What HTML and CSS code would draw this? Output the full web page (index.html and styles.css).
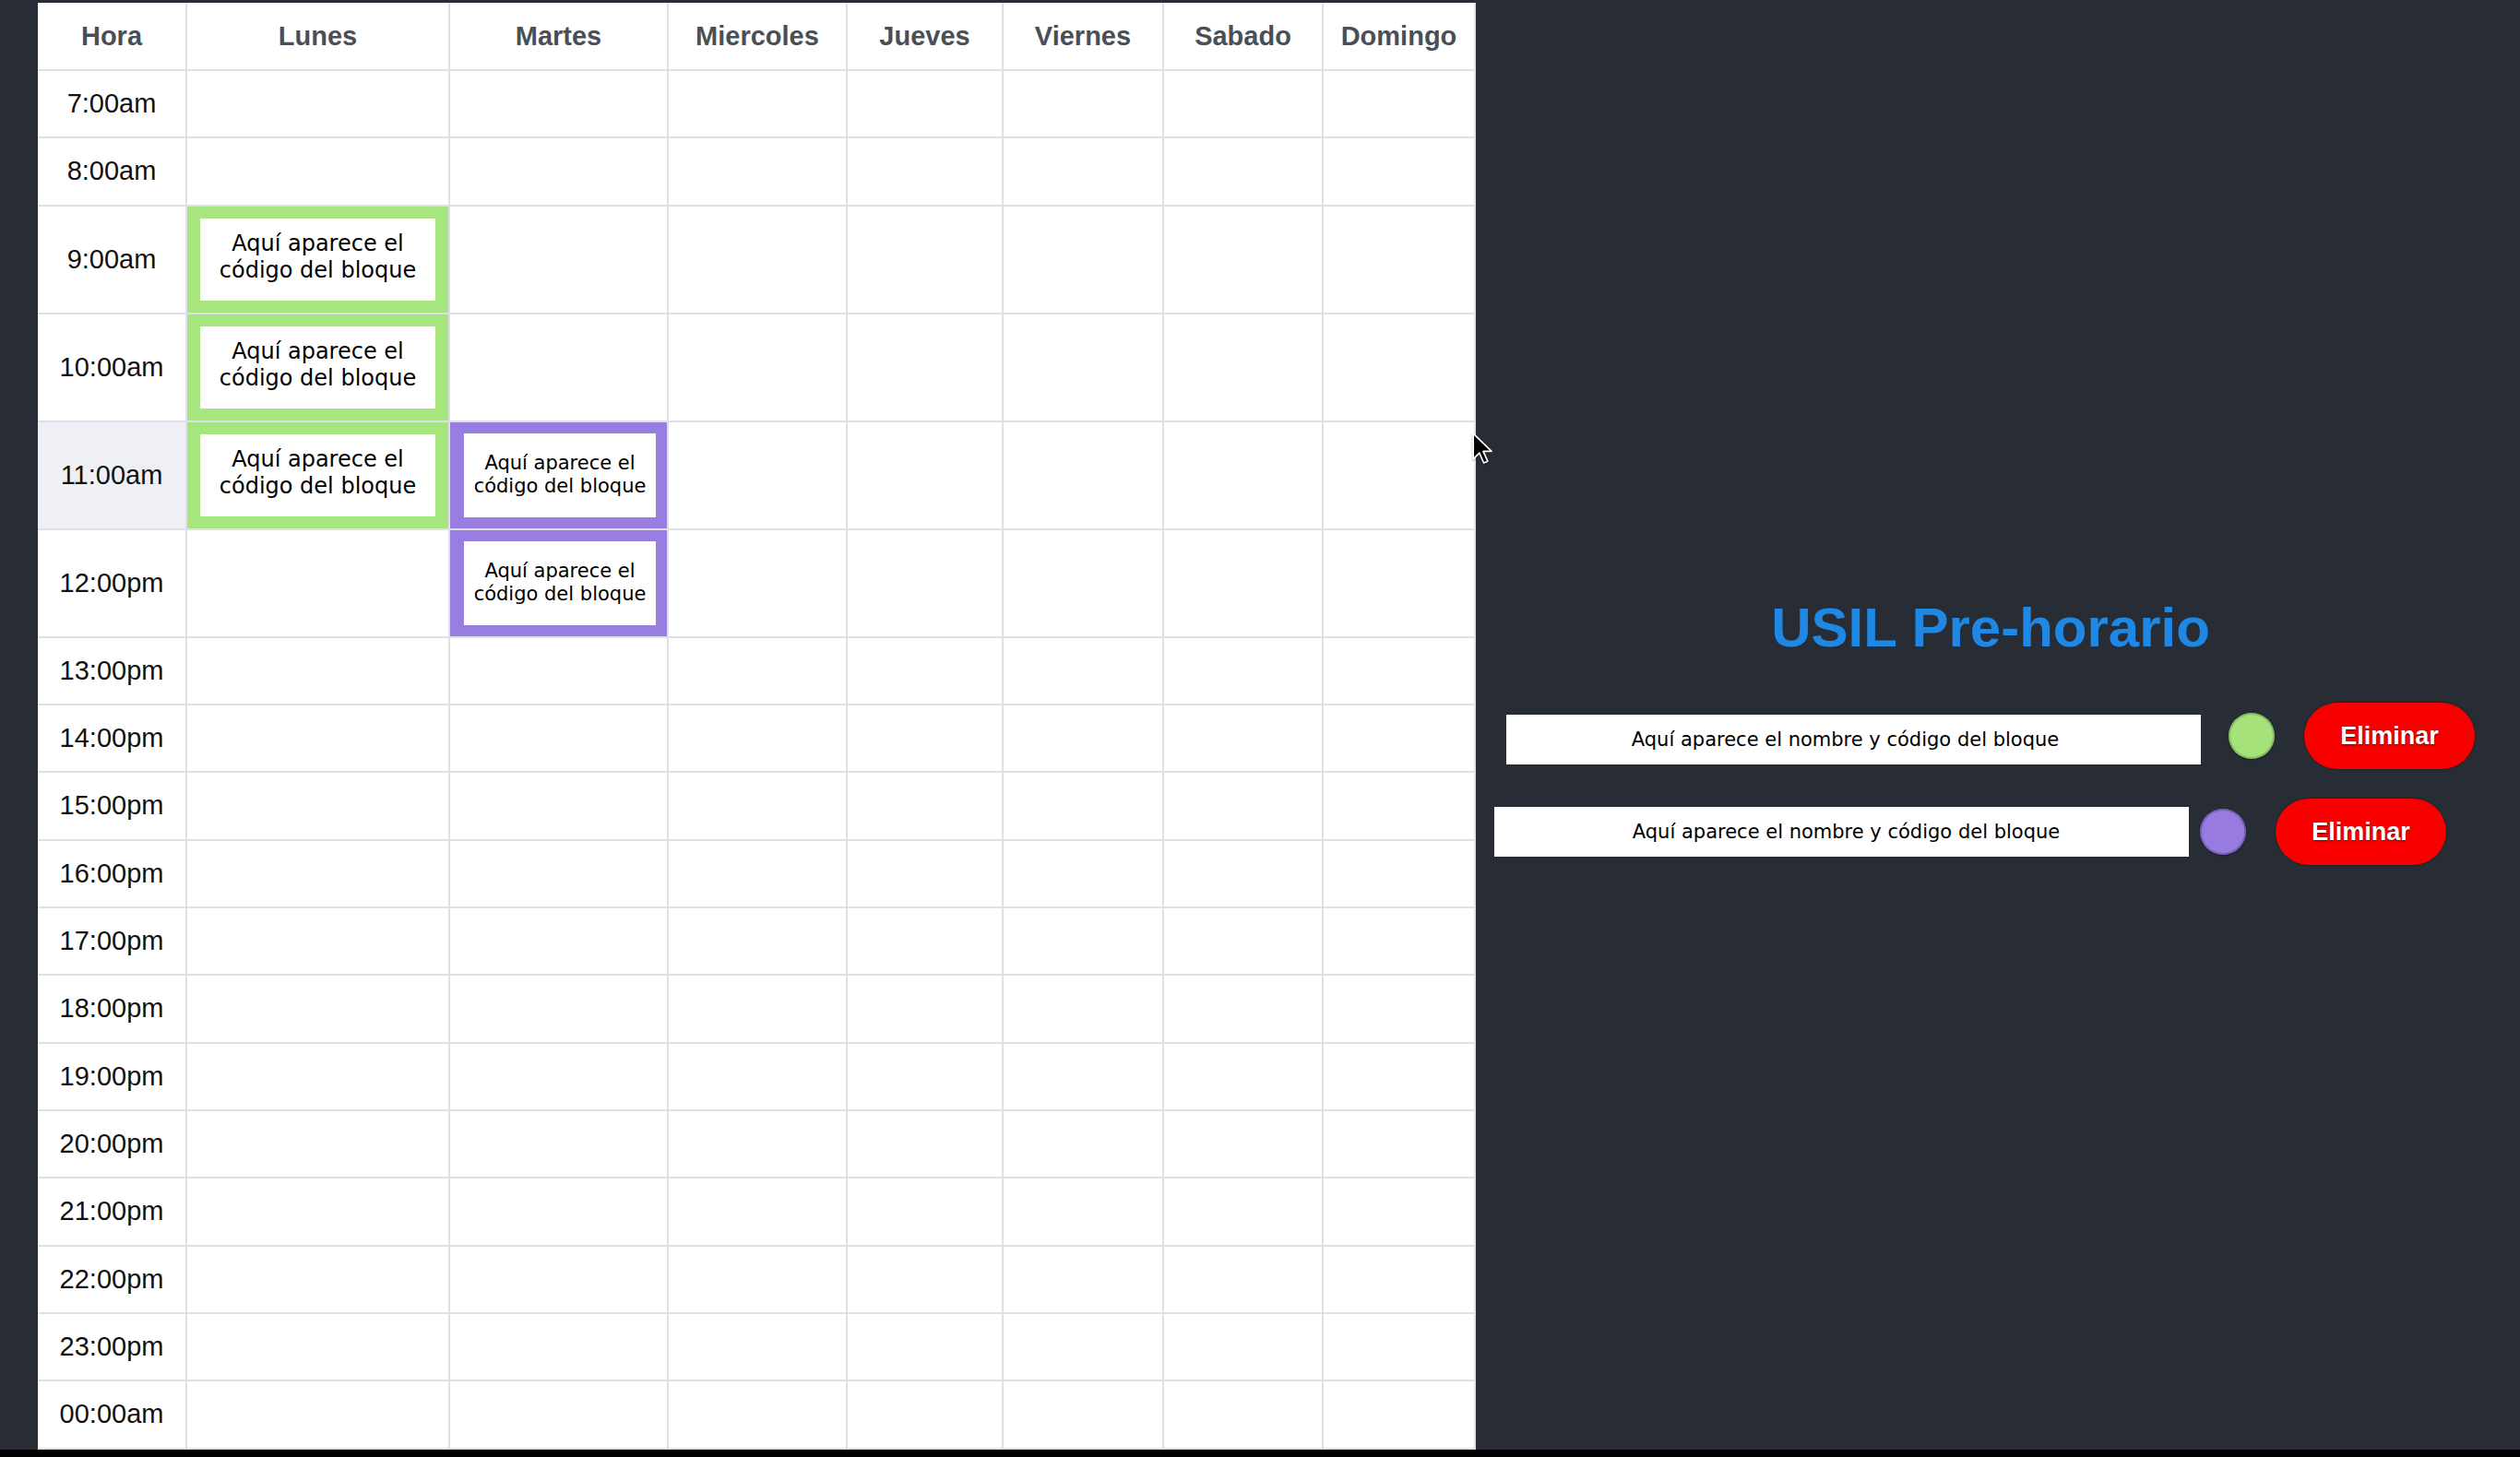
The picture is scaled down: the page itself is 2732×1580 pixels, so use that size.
FILE: index.html
```html
<!DOCTYPE html>
<html lang="es">
<head>
<meta charset="utf-8">
<title>USIL Pre-horario</title>
<link rel="stylesheet" href="styles.css">
</head>
<body>
<div class="app">
  <div class="schedule">
    <table class="grid">
      <colgroup>
        <col class="c-hora"><col class="c-lun"><col class="c-mar"><col class="c-mie"><col class="c-jue"><col class="c-vie"><col class="c-sab"><col class="c-dom">
      </colgroup>
      <thead>
        <tr class="r-head"><th>Hora</th><th>Lunes</th><th>Martes</th><th>Miercoles</th><th>Jueves</th><th>Viernes</th><th>Sabado</th><th>Domingo</th></tr>
      </thead>
      <tbody>
        <tr class="r-std"><td class="hour">7:00am</td><td></td><td></td><td></td><td></td><td></td><td></td><td></td></tr>
        <tr class="r-std"><td class="hour">8:00am</td><td></td><td></td><td></td><td></td><td></td><td></td><td></td></tr>
        <tr class="r-block"><td class="hour">9:00am</td><td class="slot slot-green"><div class="card card-green">Aquí aparece el código del bloque</div></td><td></td><td></td><td></td><td></td><td></td><td></td></tr>
        <tr class="r-block"><td class="hour">10:00am</td><td class="slot slot-green"><div class="card card-green">Aquí aparece el código del bloque</div></td><td></td><td></td><td></td><td></td><td></td><td></td></tr>
        <tr class="r-block"><td class="hour hour-active">11:00am</td><td class="slot slot-green"><div class="card card-green">Aquí aparece el código del bloque</div></td><td class="slot slot-purple"><div class="card card-purple">Aquí aparece el código del bloque</div></td><td></td><td></td><td></td><td></td><td></td></tr>
        <tr class="r-block"><td class="hour">12:00pm</td><td></td><td class="slot slot-purple"><div class="card card-purple">Aquí aparece el código del bloque</div></td><td></td><td></td><td></td><td></td><td></td></tr>
        <tr class="r-std"><td class="hour">13:00pm</td><td></td><td></td><td></td><td></td><td></td><td></td><td></td></tr>
        <tr class="r-std"><td class="hour">14:00pm</td><td></td><td></td><td></td><td></td><td></td><td></td><td></td></tr>
        <tr class="r-std"><td class="hour">15:00pm</td><td></td><td></td><td></td><td></td><td></td><td></td><td></td></tr>
        <tr class="r-std"><td class="hour">16:00pm</td><td></td><td></td><td></td><td></td><td></td><td></td><td></td></tr>
        <tr class="r-std"><td class="hour">17:00pm</td><td></td><td></td><td></td><td></td><td></td><td></td><td></td></tr>
        <tr class="r-std"><td class="hour">18:00pm</td><td></td><td></td><td></td><td></td><td></td><td></td><td></td></tr>
        <tr class="r-std"><td class="hour">19:00pm</td><td></td><td></td><td></td><td></td><td></td><td></td><td></td></tr>
        <tr class="r-std"><td class="hour">20:00pm</td><td></td><td></td><td></td><td></td><td></td><td></td><td></td></tr>
        <tr class="r-std"><td class="hour">21:00pm</td><td></td><td></td><td></td><td></td><td></td><td></td><td></td></tr>
        <tr class="r-std"><td class="hour">22:00pm</td><td></td><td></td><td></td><td></td><td></td><td></td><td></td></tr>
        <tr class="r-std"><td class="hour">23:00pm</td><td></td><td></td><td></td><td></td><td></td><td></td><td></td></tr>
        <tr class="r-std"><td class="hour">00:00am</td><td></td><td></td><td></td><td></td><td></td><td></td><td></td></tr>
      </tbody>
    </table>
  </div>

  <div class="panel">
    <h1 class="title">USIL Pre-horario</h1>
    <div class="item item-first">
      <input class="field field-first" type="text" readonly value="Aquí aparece el nombre y código del bloque">
      <span class="dot dot-green"></span>
      <button class="remove" type="button">Eliminar</button>
    </div>
    <div class="item item-second">
      <input class="field field-second" type="text" readonly value="Aquí aparece el nombre y código del bloque">
      <span class="dot dot-purple"></span>
      <button class="remove" type="button">Eliminar</button>
    </div>
  </div>

  <svg class="cursor" width="24" height="36" viewBox="0 0 20 30" aria-hidden="true">
    <path d="M1 1 L1 24 L6.5 18.5 L10.5 27.5 L14 26 L10 17 L17.5 17 Z" fill="#000" stroke="#fff" stroke-width="1.4" stroke-linejoin="round"/>
  </svg>
</div>
</body>
</html>
```

FILE: styles.css
```css
html {
  background: #000;
}

body {
  margin: 0;
}

.app {
  position: relative;
  display: flex;
  height: 1572px;
  box-sizing: border-box;
  padding-top: 3px;
  background: #282c34;
  overflow: hidden;
}

/* ---------- schedule table ---------- */
.schedule {
  flex: none;
  margin-left: 41px;
  width: 1559px;
}

.grid {
  width: 1559px;
  table-layout: fixed;
  border-collapse: separate;
  border-spacing: 0;
  background: #fff;
}

.c-hora { width: 162px; }
.c-lun { width: 285px; }
.c-mar { width: 237px; }
.c-mie { width: 194px; }
.c-jue { width: 169px; }
.c-vie { width: 174px; }
.c-sab { width: 173px; }
.c-dom { width: 165px; }

.grid th,
.grid td {
  box-sizing: border-box;
  padding: 0;
  border-right: 2px solid #dfe0e5;
  border-bottom: 2px solid #dfe0e5;
  text-align: center;
  vertical-align: middle;
}

.r-head { height: 74px; }
.r-std { height: 73.33px; }
.r-block { height: 117px; }

.grid th {
  font-family: "Liberation Sans", Arial, sans-serif;
  font-weight: 700;
  font-size: 29px;
  color: #4a4f57;
}

.hour {
  font-family: "Liberation Sans", Arial, sans-serif;
  font-size: 29px;
  color: #111;
}

.hour-active {
  background: #eff0f5;
}

/* ---------- course blocks ---------- */
.slot-green {
  background: #a7e67e;
}

.slot-green .card {
  margin: 0 14px;
}

.slot-purple {
  background: #997ee2;
}

.slot-purple .card {
  margin: 0 12px 0 15px;
}

.card {
  display: flex;
  align-items: center;
  justify-content: center;
  background: #fff;
  color: #000;
  text-align: center;
  font-family: "DejaVu Sans", Verdana, sans-serif;
}

.card-green {
  box-sizing: border-box;
  height: 89px;
  padding-bottom: 5px;
  font-size: 24px;
  line-height: 29px;
}

.card-purple {
  height: 91px;
  font-size: 21px;
  line-height: 25px;
}

/* ---------- right panel ---------- */
.panel {
  flex: 1;
  display: flex;
  flex-direction: column;
  align-items: center;
  padding-top: 648px;
  padding-right: 16px;
}

.title {
  margin: 0;
  font-family: "Liberation Sans", Arial, sans-serif;
  font-weight: 700;
  font-size: 60px;
  line-height: 60px;
  color: #1f88e5;
  text-align: center;
}

.item {
  display: flex;
  align-items: center;
}

.item-first {
  margin-top: 51px;
}

.item-second {
  margin-top: 32px;
  margin-right: 44px;
}

.field {
  box-sizing: border-box;
  width: 753px;
  height: 54px;
  margin: 0 12px 0 0;
  border: none;
  outline: none;
  background: #fff;
  color: #000;
  font-family: "DejaVu Sans", Verdana, sans-serif;
  font-size: 21px;
  text-align: center;
}

.field-first {
  margin-top: 7px;
  margin-right: 30px;
  padding: 0 18px 0 0;
}

.field-second {
  padding: 0 0 0 10px;
}

.dot {
  flex: none;
  width: 50px;
  height: 50px;
  margin-right: 32px;
  border-radius: 50%;
}

.dot-green {
  background: #a5e27a;
  box-shadow: inset 0 0 0 2px rgba(80, 120, 60, 0.35), 0 1px 2px rgba(0, 0, 0, 0.4);
}

.dot-purple {
  background: #977be0;
  box-shadow: inset 0 0 0 2px rgba(70, 50, 130, 0.35), 0 1px 2px rgba(0, 0, 0, 0.4);
}

.remove {
  flex: none;
  width: 185px;
  height: 72px;
  padding: 0;
  border: none;
  border-radius: 36px;
  background: #f90000;
  color: #fff;
  font-family: "Liberation Sans", Arial, sans-serif;
  font-weight: 700;
  font-size: 27px;
  text-shadow: 0 1px 2px rgba(0, 0, 0, 0.55);
  box-shadow: 0 0 2px rgba(0, 0, 0, 0.6);
}

/* ---------- mouse pointer overlay ---------- */
.cursor {
  position: absolute;
  left: 1596px;
  top: 469px;
  filter: drop-shadow(0 1px 1px rgba(0, 0, 0, 0.35));
}
```
